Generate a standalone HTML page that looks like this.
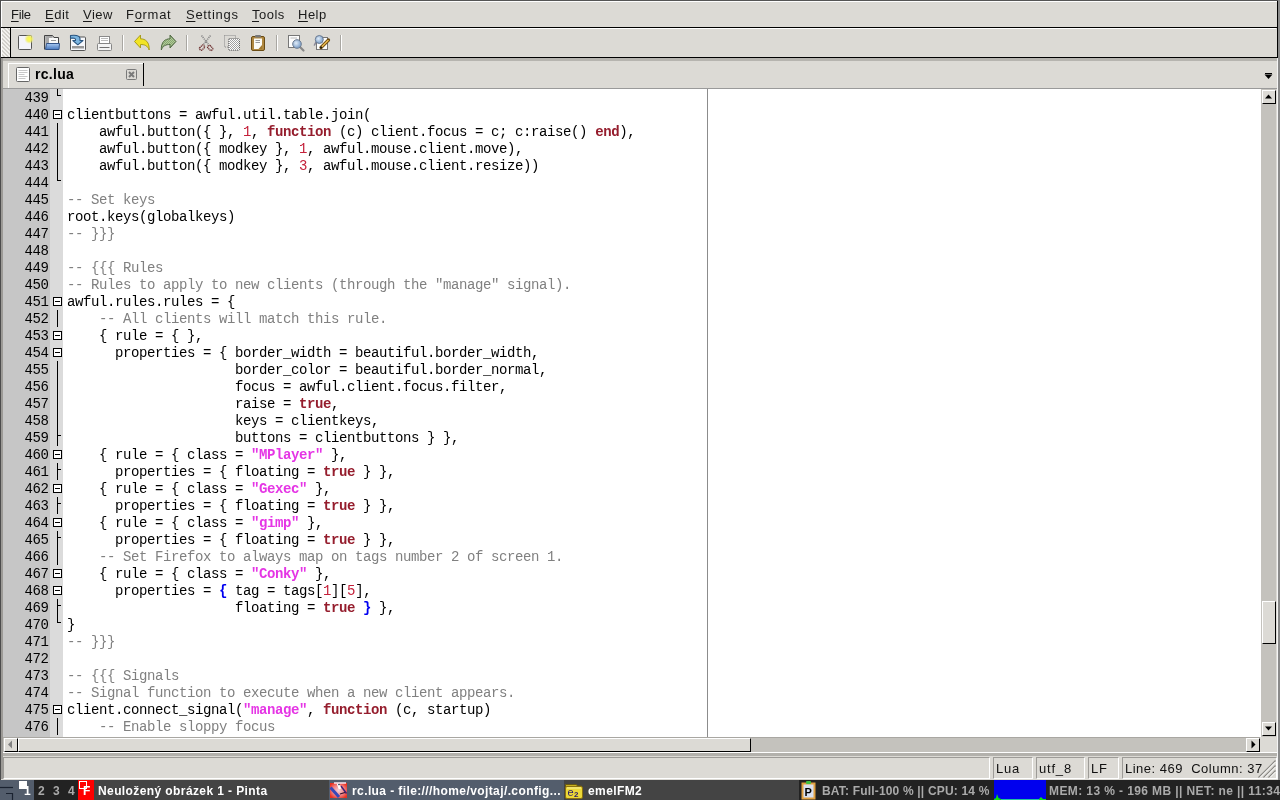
<!DOCTYPE html>
<html><head><meta charset="utf-8">
<style>
*{margin:0;padding:0;box-sizing:border-box}
html,body{width:1280px;height:800px;overflow:hidden;background:#dcdad5;font-family:"Liberation Sans",sans-serif;position:relative}
body{will-change:transform;-webkit-font-smoothing:antialiased}
.a{position:absolute}
/* window border */
#lb{left:0;top:0;width:1px;height:780px;background:#4c4c4c}
#lb2{left:1px;top:58px;width:2px;height:721px;background:#9c9a96}
#rb{left:1278px;top:0;width:2px;height:780px;background:#8a8a8a}
#rbw{left:1277px;top:58px;width:1px;height:721px;background:#f4f4f4}
#tb{left:0;top:0;width:1280px;height:1px;background:#555}
/* menu */
.mi{position:absolute;top:7px;font-size:13px;letter-spacing:0.5px;color:#1a1a1a;white-space:pre}
.mi u{text-decoration:underline;text-decoration-thickness:1px;text-underline-offset:1.5px}
/* toolbar */
#tbar{left:1px;top:27px;width:1277px;height:31px;background:#dcdad5;border-top:1px solid #000;border-bottom:1px solid #000}
#handle{left:2px;top:28px;width:8px;height:29px;background:repeating-linear-gradient(45deg,#f2f1ee 0 1.4px,#d2d0cb 1.4px 2.8px)}
#hline{left:10px;top:28px;width:1px;height:29px;background:#000}
#hwhite{left:11px;top:28px;width:1265px;height:1px;background:#fff}
.sep{position:absolute;top:35px;width:2px;height:16px;border-left:1px solid #a9a7a2;border-right:1px solid #fff}
/* tabs */
#tabarea{left:3px;top:58px;width:1274px;height:31px;background:#dcdad5}
#tabshade{left:3px;top:58px;width:1274px;height:3px;background:#b6b4af}
#tab{left:8px;top:63px;width:135px;height:25px;background:#dcdad5;border-top:1px solid #fff;border-left:1px solid #fff}
#tabr{left:143px;top:63px;width:1px;height:23px;background:#000}
#tabtxt{left:35px;top:66px;font-size:14px;font-weight:bold;color:#000;letter-spacing:0.3px}
#tabline{left:3px;top:88px;width:1274px;height:1px;background:#9a9a9a}
/* editor */
#ed{left:3px;top:89px;width:1258px;height:648px;background:#fff;overflow:hidden}
#gut{left:3px;top:89px;width:47px;height:648px;background:#c6c6c6}
#fm{left:50px;top:89px;width:13px;height:648px;background:#dbdbdb}
#edge{left:707px;top:89px;width:1px;height:648px;background:#8c8c8c}
.ln{position:absolute;left:67px;height:17px;line-height:17px;margin-top:1px;font-family:"Liberation Mono",monospace;font-size:14px;letter-spacing:-0.4px;color:#000;white-space:pre}
.nu{position:absolute;left:3px;width:45.4px;text-align:right;height:17px;line-height:17px;margin-top:1px;font-family:"Liberation Mono",monospace;font-size:14px;letter-spacing:-0.4px;color:#000;white-space:pre}
i{font-style:normal}
i.k{color:#951d2d;font-weight:bold}
i.n{color:#c4203a}
i.s{color:#e535e5;font-weight:bold}
i.c{color:#808080}
i.b{color:#0000f0;font-weight:bold}
.fb{position:absolute;left:53px;width:9px;height:9px;border:1px solid #000;background:#fff}
.fb:after{content:"";position:absolute;left:1px;top:3px;width:5px;height:1px;background:#000}
.fv{position:absolute;left:57px;width:1px;background:#000}
.fh{position:absolute;left:57px;width:4px;height:1px;background:#000}
/* vscroll */
#vs{left:1261px;top:89px;width:15px;height:648px;background:#c4c2bd}
.btn{position:absolute;background:#dcdad5;border-top:1px solid #fff;border-left:1px solid #fff;border-right:1px solid #000;border-bottom:1px solid #000}
/* hscroll */
#hs{left:3px;top:737px;width:1258px;height:15px;background:#c4c2bd}
#corner{left:1260px;top:737px;width:17px;height:15px;background:#dcdad5}
/* status */
#sbw{left:3px;top:752px;width:1274px;height:1px;background:#fff}
#sbg{left:3px;top:753px;width:1274px;height:3px;background:#b3b1ac}
.pn{position:absolute;top:757px;height:22px;border-top:1px solid #9d9b97;border-left:1px solid #9d9b97;border-right:1px solid #fff;border-bottom:1px solid #fff}
.st{position:absolute;top:761px;font-size:13px;color:#111;white-space:pre;letter-spacing:0.8px}
/* taskbar */
#task{left:0;top:780px;width:1280px;height:20px;background:#222}
.tk{position:absolute;top:780px;height:20px;font-size:12px;font-weight:bold;white-space:pre;letter-spacing:0.4px}
</style></head><body>
<div id="tb" class="a"></div>
<!-- menu -->
<div class="mi" style="left:11px;letter-spacing:-0.3px"><u>F</u>ile</div>
<div class="mi" style="left:45px"><u>E</u>dit</div>
<div class="mi" style="left:83px"><u>V</u>iew</div>
<div class="mi" style="left:126px;letter-spacing:0.7px">F<u>o</u>rmat</div>
<div class="mi" style="left:186px;letter-spacing:0.7px"><u>S</u>ettings</div>
<div class="mi" style="left:252px"><u>T</u>ools</div>
<div class="mi" style="left:298px"><u>H</u>elp</div>
<!-- toolbar -->
<div id="tbar" class="a"></div>
<div id="handle" class="a"></div>
<div id="hline" class="a"></div>
<div id="hwhite" class="a"></div>
<div class="sep" style="left:122px"></div>
<div class="sep" style="left:186px"></div>
<div class="sep" style="left:276px"></div>
<div class="sep" style="left:340px"></div>
<!-- tabs -->
<div id="tabarea" class="a"></div>
<div id="tabshade" class="a"></div>
<div id="tab" class="a"></div>
<div id="tabr" class="a"></div>
<div id="tabtxt" class="a">rc.lua</div>
<div id="tabline" class="a"></div>
<svg class="a" style="left:0;top:0" width="1280" height="100" viewBox="0 0 1280 100">
<defs>
<pattern id="dith" width="2" height="2" patternUnits="userSpaceOnUse"><rect width="1" height="1" fill="#444"/><rect x="1" y="1" width="1" height="1" fill="#444"/></pattern>
<pattern id="dithw" width="2" height="2" patternUnits="userSpaceOnUse"><rect width="2" height="2" fill="#fff"/><rect width="1" height="1" fill="#777"/><rect x="1" y="1" width="1" height="1" fill="#777"/></pattern>
<radialGradient id="glow"><stop offset="0" stop-color="#ffff40"/><stop offset="0.5" stop-color="#f4f060" stop-opacity="0.9"/><stop offset="1" stop-color="#f0f080" stop-opacity="0"/></radialGradient>
<linearGradient id="blu" x1="0" y1="0" x2="0" y2="1"><stop offset="0" stop-color="#a8c8f0"/><stop offset="1" stop-color="#4a7ac0"/></linearGradient>
<radialGradient id="lens" cx="0.4" cy="0.4"><stop offset="0" stop-color="#e0ecf8"/><stop offset="1" stop-color="#8aaad0"/></radialGradient>
</defs>
<!-- New -->
<rect x="18.5" y="35.5" width="13" height="14" rx="1" fill="#f4f4fa" stroke="#555" stroke-width="1"/>
<circle cx="29.2" cy="39" r="5" fill="url(#glow)"/>
<!-- Open -->
<path d="M44.5 49.5 V35.5 H52.5 L54 37.5 H58.5 V44" fill="#c8c8c8" stroke="#444" stroke-width="1"/>
<path d="M45.5 37 H52 M45.5 39 H52 M45.5 41 H52 M45.5 43 H52" stroke="#888" stroke-width="1"/>
<rect x="49" y="38" width="9" height="6" fill="#fafafa"/>
<path d="M51 40.5 H56" stroke="#999"/>
<path d="M45.5 49.5 L46.5 43.5 H59.5 L59 49.5 Z" fill="url(#blu)" stroke="#34558a" stroke-width="1" stroke-linejoin="round"/>
<!-- Save -->
<rect x="70.5" y="37" width="15" height="13.5" rx="1" fill="#f6f8fc" stroke="#555" stroke-width="1"/>
<rect x="72" y="46" width="12" height="2.5" fill="#999"/>
<path d="M70.5 35.5 C74.5 35 79.5 35 80 38.5 V40.5 H83 L77.8 44.8 L72.8 40.5 H75.5 V39.5 C75.5 38.3 74 38 70.5 38.2 Z" fill="#7ab4e0" stroke="#2a5580" stroke-width="1.1" stroke-linejoin="round"/>
<!-- Print -->
<rect x="99.5" y="36.5" width="10" height="7" fill="#fff" stroke="#8a8a8a" stroke-width="1"/>
<path d="M101 38.5 H108 M101 40.5 H108" stroke="#bbb"/>
<rect x="97.5" y="43.5" width="14" height="7" rx="1" fill="#f4f4f4" stroke="#858585" stroke-width="1"/>
<path d="M99.5 47.5 H109.5" stroke="#707070" stroke-width="1"/>
<!-- Undo -->
<path d="M134.5 41.5 L140.5 35 V38.8 C145.5 38.8 149.5 42 149.2 50 C147.5 45.5 144.5 44.5 140.5 44.5 V48 Z" fill="#f2e424" stroke="#a89c1c" stroke-width="1" stroke-linejoin="round"/>
<!-- Redo (disabled dither) -->
<path d="M176 41.5 L170 35 V38.8 C165 38.8 161 42 161.3 50 C163 45.5 166 44.5 170 44.5 V48 Z" fill="#a8d088" stroke="#3a5a2a" stroke-width="1" stroke-linejoin="round" opacity="0.85"/>
<path d="M176 41.5 L170 35 V38.8 C165 38.8 161 42 161.3 50 C163 45.5 166 44.5 170 44.5 V48 Z" fill="url(#dith)" opacity="0.35"/>
<!-- Cut -->
<g>
<path d="M201.5 35.5 L208.5 44.5 M210.5 35.5 L203.5 44.5" stroke="#8a8a8a" stroke-width="1.6" stroke-dasharray="1.2 0.8"/>
<g transform="rotate(-45 201.8 47.8)"><rect x="199.3" y="46.3" width="5.5" height="3.2" rx="1" fill="none" stroke="#6a2a2a" stroke-width="1.3" stroke-dasharray="1.2 0.6"/></g>
<g transform="rotate(45 210.2 47.8)"><rect x="207.5" y="46.3" width="5.5" height="3.2" rx="1" fill="none" stroke="#6a2a2a" stroke-width="1.3" stroke-dasharray="1.2 0.6"/></g>
</g>
<!-- Copy disabled -->
<rect x="224.5" y="35.5" width="11" height="11.5" fill="none" stroke="#8a8a8a" stroke-width="1" stroke-dasharray="1 1"/>
<rect x="228.5" y="38.5" width="11" height="12" rx="1" fill="#fff" stroke="#555" stroke-width="1" stroke-dasharray="1 1"/>
<rect x="229" y="39" width="10" height="11" fill="url(#dithw)" opacity="0.7"/>
<!-- Paste -->
<rect x="251.5" y="36.5" width="13" height="14" rx="1.5" fill="#b08840" stroke="#6a4c14" stroke-width="1"/>
<rect x="254" y="38.5" width="8" height="10.5" fill="#fbfbf6"/>
<path d="M262 45 L258.5 49 H262 Z" fill="#a07a30"/>
<path d="M255.5 40.5 H260 M255.5 42.5 H260" stroke="#999"/>
<rect x="255" y="35" width="6" height="2.5" rx="1" fill="#777"/>
<!-- Find -->
<rect x="288.5" y="35.5" width="11" height="12" fill="#fdfdfd" stroke="#777" stroke-width="1"/>
<path d="M290.5 38 H297" stroke="#bbb"/>
<path d="M300 47 L303.5 50.5" stroke="#888" stroke-width="2.2" stroke-linecap="round"/>
<circle cx="297" cy="44" r="4.3" fill="url(#lens)" stroke="#6a7a90" stroke-width="1"/>
<!-- Replace -->
<rect x="316.5" y="37.5" width="11" height="12" fill="#fdfdfd" stroke="#777" stroke-width="1"/>
<path d="M316 42 L314.5 45" stroke="#889" stroke-width="1.6" stroke-linecap="round"/>
<circle cx="319.3" cy="39.5" r="4" fill="url(#lens)" stroke="#6a7a90" stroke-width="1"/>
<path d="M321 47.5 L328.5 40" stroke="#6a4a10" stroke-width="3.2" stroke-linecap="round"/>
<path d="M321.5 47 L328 40.5" stroke="#e8b850" stroke-width="1.6" stroke-linecap="round"/>
<path d="M320.5 48 L321.8 46.7" stroke="#111" stroke-width="1.6"/>
<!-- tab doc icon -->
<rect x="16.5" y="67.5" width="13" height="14" rx="1" fill="#fff" stroke="#666" stroke-width="1"/>
<path d="M18.5 70.5 H27.5 M18.5 72.5 H27.5 M18.5 74.5 H24.5 M18.5 76.5 H27.5 M18.5 78.5 H25.5" stroke="#c8c8c8" stroke-width="1"/>
<!-- close box -->
<rect x="126.5" y="69.5" width="10" height="10" rx="1" fill="none" stroke="#7a7a7a" stroke-width="1"/>
<path d="M129 72 L134 77 M134 72 L129 77" stroke="#7a7a7a" stroke-width="2"/>
<!-- dropdown -->
<path d="M1265 73.5 H1272" stroke="#000" stroke-width="1"/>
<path d="M1264.5 74.5 H1272.5 L1268.5 79 Z" fill="#000"/>
</svg>

<!-- editor -->
<div id="ed" class="a"></div>
<div id="gut" class="a"></div>
<div id="fm" class="a"></div>
<div id="edge" class="a"></div>
<div class="nu" style="top:89px">439</div>
<div class="nu" style="top:106px">440</div>
<div class="nu" style="top:123px">441</div>
<div class="nu" style="top:140px">442</div>
<div class="nu" style="top:157px">443</div>
<div class="nu" style="top:174px">444</div>
<div class="nu" style="top:191px">445</div>
<div class="nu" style="top:208px">446</div>
<div class="nu" style="top:225px">447</div>
<div class="nu" style="top:242px">448</div>
<div class="nu" style="top:259px">449</div>
<div class="nu" style="top:276px">450</div>
<div class="nu" style="top:293px">451</div>
<div class="nu" style="top:310px">452</div>
<div class="nu" style="top:327px">453</div>
<div class="nu" style="top:344px">454</div>
<div class="nu" style="top:361px">455</div>
<div class="nu" style="top:378px">456</div>
<div class="nu" style="top:395px">457</div>
<div class="nu" style="top:412px">458</div>
<div class="nu" style="top:429px">459</div>
<div class="nu" style="top:446px">460</div>
<div class="nu" style="top:463px">461</div>
<div class="nu" style="top:480px">462</div>
<div class="nu" style="top:497px">463</div>
<div class="nu" style="top:514px">464</div>
<div class="nu" style="top:531px">465</div>
<div class="nu" style="top:548px">466</div>
<div class="nu" style="top:565px">467</div>
<div class="nu" style="top:582px">468</div>
<div class="nu" style="top:599px">469</div>
<div class="nu" style="top:616px">470</div>
<div class="nu" style="top:633px">471</div>
<div class="nu" style="top:650px">472</div>
<div class="nu" style="top:667px">473</div>
<div class="nu" style="top:684px">474</div>
<div class="nu" style="top:701px">475</div>
<div class="nu" style="top:718px">476</div>
<div class="fv" style="top:89px;height:7px"></div><div class="fh" style="top:95px"></div>
<div class="fb" style="top:110px"></div>
<div class="fv" style="top:123px;height:17px"></div>
<div class="fv" style="top:140px;height:17px"></div>
<div class="fv" style="top:157px;height:17px"></div>
<div class="fv" style="top:174px;height:7px"></div><div class="fh" style="top:180px"></div>
<div class="fb" style="top:297px"></div>
<div class="fv" style="top:310px;height:17px"></div>
<div class="fb" style="top:331px"></div>
<div class="fb" style="top:348px"></div>
<div class="fv" style="top:361px;height:17px"></div>
<div class="fv" style="top:378px;height:17px"></div>
<div class="fv" style="top:395px;height:17px"></div>
<div class="fv" style="top:412px;height:17px"></div>
<div class="fv" style="top:429px;height:17px"></div><div class="fh" style="top:435px"></div>
<div class="fb" style="top:450px"></div>
<div class="fv" style="top:463px;height:17px"></div><div class="fh" style="top:469px"></div>
<div class="fb" style="top:484px"></div>
<div class="fv" style="top:497px;height:17px"></div><div class="fh" style="top:503px"></div>
<div class="fb" style="top:518px"></div>
<div class="fv" style="top:531px;height:17px"></div><div class="fh" style="top:537px"></div>
<div class="fv" style="top:548px;height:17px"></div>
<div class="fb" style="top:569px"></div>
<div class="fb" style="top:586px"></div>
<div class="fv" style="top:599px;height:17px"></div><div class="fh" style="top:605px"></div>
<div class="fv" style="top:616px;height:7px"></div><div class="fh" style="top:622px"></div>
<div class="fb" style="top:705px"></div>
<div class="fv" style="top:718px;height:17px"></div>
<div class="ln" style="top:89px"></div>
<div class="ln" style="top:106px">clientbuttons = awful.util.table.join(</div>
<div class="ln" style="top:123px">    awful.button({ }, <i class="n">1</i>, <i class="k">function</i> (c) client.focus = c; c:raise() <i class="k">end</i>),</div>
<div class="ln" style="top:140px">    awful.button({ modkey }, <i class="n">1</i>, awful.mouse.client.move),</div>
<div class="ln" style="top:157px">    awful.button({ modkey }, <i class="n">3</i>, awful.mouse.client.resize))</div>
<div class="ln" style="top:174px"></div>
<div class="ln" style="top:191px"><i class="c">-- Set keys</i></div>
<div class="ln" style="top:208px">root.keys(globalkeys)</div>
<div class="ln" style="top:225px"><i class="c">-- }}}</i></div>
<div class="ln" style="top:242px"></div>
<div class="ln" style="top:259px"><i class="c">-- {{{ Rules</i></div>
<div class="ln" style="top:276px"><i class="c">-- Rules to apply to new clients (through the &quot;manage&quot; signal).</i></div>
<div class="ln" style="top:293px">awful.rules.rules = {</div>
<div class="ln" style="top:310px">    <i class="c">-- All clients will match this rule.</i></div>
<div class="ln" style="top:327px">    { rule = { },</div>
<div class="ln" style="top:344px">      properties = { border_width = beautiful.border_width,</div>
<div class="ln" style="top:361px">                     border_color = beautiful.border_normal,</div>
<div class="ln" style="top:378px">                     focus = awful.client.focus.filter,</div>
<div class="ln" style="top:395px">                     raise = <i class="k">true</i>,</div>
<div class="ln" style="top:412px">                     keys = clientkeys,</div>
<div class="ln" style="top:429px">                     buttons = clientbuttons } },</div>
<div class="ln" style="top:446px">    { rule = { class = <i class="s">&quot;MPlayer&quot;</i> },</div>
<div class="ln" style="top:463px">      properties = { floating = <i class="k">true</i> } },</div>
<div class="ln" style="top:480px">    { rule = { class = <i class="s">&quot;Gexec&quot;</i> },</div>
<div class="ln" style="top:497px">      properties = { floating = <i class="k">true</i> } },</div>
<div class="ln" style="top:514px">    { rule = { class = <i class="s">&quot;gimp&quot;</i> },</div>
<div class="ln" style="top:531px">      properties = { floating = <i class="k">true</i> } },</div>
<div class="ln" style="top:548px">    <i class="c">-- Set Firefox to always map on tags number 2 of screen 1.</i></div>
<div class="ln" style="top:565px">    { rule = { class = <i class="s">&quot;Conky&quot;</i> },</div>
<div class="ln" style="top:582px">      properties = <i class="b">{</i> tag = tags[<i class="n">1</i>][<i class="n">5</i>],</div>
<div class="ln" style="top:599px">                     floating = <i class="k">true</i> <i class="b">}</i> },</div>
<div class="ln" style="top:616px">}</div>
<div class="ln" style="top:633px"><i class="c">-- }}}</i></div>
<div class="ln" style="top:650px"></div>
<div class="ln" style="top:667px"><i class="c">-- {{{ Signals</i></div>
<div class="ln" style="top:684px"><i class="c">-- Signal function to execute when a new client appears.</i></div>
<div class="ln" style="top:701px">client.connect_signal(<i class="s">&quot;manage&quot;</i>, <i class="k">function</i> (c, startup)</div>
<div class="ln" style="top:718px">    <i class="c">-- Enable sloppy focus</i></div>
<!-- vscroll -->
<div id="vs" class="a"></div>
<div class="btn" style="left:1262px;top:90px;width:14px;height:14px"></div>
<div class="btn" style="left:1262px;top:601px;width:14px;height:43px"></div>
<div class="btn" style="left:1262px;top:722px;width:14px;height:14px"></div>
<!-- hscroll -->
<div id="hs" class="a"></div>
<div class="a" style="left:3px;top:737px;width:1258px;height:1px;background:#a9a7a2"></div>
<div class="btn" style="left:4px;top:738px;width:14px;height:14px"></div>
<div class="btn" style="left:18px;top:738px;width:733px;height:14px"></div>
<div class="btn" style="left:1246px;top:738px;width:14px;height:14px"></div>
<div id="corner" class="a"></div>
<!-- status -->
<div id="sbw" class="a"></div>
<div id="sbg" class="a"></div>
<div class="pn" style="left:3px;width:987px"></div>
<div class="pn" style="left:993px;width:40px"></div>
<div class="pn" style="left:1036px;width:49px"></div>
<div class="pn" style="left:1088px;width:31px"></div>
<div class="pn" style="left:1122px;width:155px"></div>
<div class="st" style="left:996px">Lua</div>
<div class="st" style="left:1039px">utf_8</div>
<div class="st" style="left:1091px">LF</div>
<div class="st" style="left:1125px;letter-spacing:0.5px">Line: 469  Column: 37</div>
<svg class="a" style="left:0;top:0;pointer-events:none" width="1280" height="800">
<path d="M1265 98.5 H1272 L1268.5 94.5 Z" fill="#000"/>
<path d="M1265 726.5 H1272 L1268.5 730.5 Z" fill="#000"/>
<path d="M12 740.5 V748.5 L8 744.5 Z" fill="#808080"/>
<path d="M1251.5 740.5 V748.5 L1255.5 744.5 Z" fill="#000"/>
<path d="M1258.5 777.5 L1275.5 760.5 M1263.5 777.5 L1275.5 765.5 M1268.5 777.5 L1275.5 770.5" stroke="#8a8884" stroke-width="1.2"/>
<path d="M1260 777.5 L1275.5 762 M1265 777.5 L1275.5 767 M1270 777.5 L1275.5 772" stroke="#fff" stroke-width="1"/>
</svg>

<div id="lb" class="a"></div>
<div id="lb2" class="a"></div>
<div id="rb" class="a"></div>
<div id="rbw" class="a"></div>
<div class="a" style="left:1px;top:1px;width:1277px;height:1px;background:#fff"></div>
<div class="a" style="left:1px;top:1px;width:1px;height:56px;background:#fff"></div>
<div class="a" style="left:1px;top:27px;width:1277px;height:1px;background:#000"></div>
<div class="a" style="left:1277px;top:1px;width:1px;height:57px;background:#000"></div>
<!-- taskbar -->
<div id="task" class="a"></div>
<div class="a" style="left:0;top:780px;width:34px;height:20px;background:#535d6c"></div>
<div class="a" style="left:78px;top:780px;width:16px;height:20px;background:#ff0000"></div>
<div class="a" style="left:94px;top:780px;width:235px;height:20px;background:#444"></div>
<div class="a" style="left:329px;top:780px;width:235px;height:20px;background:#535d6c"></div>
<div class="a" style="left:564px;top:780px;width:235px;height:20px;background:#444"></div>
<svg class="a" style="left:0;top:780px" width="1280" height="20">
<path d="M0 7.5 H13" stroke="#1a2230" stroke-width="1.2"/>
<path d="M6 13.5 H12.5 V20" stroke="#1a2230" stroke-width="1.2" fill="none"/>
<rect x="19" y="1" width="8" height="8" fill="#fff"/>
<rect x="79.5" y="1.5" width="7" height="7" fill="none" stroke="#fff" stroke-width="1"/>
</svg>
<div class="tk" style="left:24px;top:784px;color:#fff">1</div>
<div class="tk" style="left:38px;top:784px;color:#aaa">2</div>
<div class="tk" style="left:53px;top:784px;color:#aaa">3</div>
<div class="tk" style="left:68px;top:784px;color:#aaa">4</div>
<div class="tk" style="left:83px;top:784px;color:#fff">F</div>
<div class="tk" style="left:98px;top:784px;color:#fff">Neuložený obrázek 1 - Pinta</div>
<div class="tk" style="left:352px;top:784px;color:#fff">rc.lua - file:///home/vojtaj/.config...</div>
<div class="tk" style="left:588px;top:784px;color:#fff">emelFM2</div>
<div class="tk" style="left:822px;top:784px;color:#aaa;letter-spacing:0.18px">BAT: Full-100 % || CPU: 14 %</div>
<div class="tk" style="left:1049px;top:784px;color:#aaa">MEM: 13 % - 196 MB || NET: ne || 11:34</div>
<div class="a" style="left:994px;top:780px;width:52px;height:20px;background:#0000ee"></div>
<svg class="a" style="left:994px;top:780px" width="52" height="20">
<path d="M0 20 V19 L2 18 L3 14 L4.5 18 L7 19 H45 L47 17 L49 19 L52 19 V20 Z" fill="#10e010"/>
<path d="M7 19.5 H45" stroke="#20c0a0" stroke-width="1"/>
</svg>
<svg class="a" style="left:329px;top:782px" width="20" height="17">
<defs><radialGradient id="kr" cx="0.5" cy="0.5" r="0.6"><stop offset="0" stop-color="#f4d0d8"/><stop offset="0.6" stop-color="#f08080"/><stop offset="1" stop-color="#e83020"/></radialGradient></defs>
<rect x="1" y="1" width="17" height="15" fill="url(#kr)"/>
<path d="M5 1 H17" stroke="#f8e8f0" stroke-width="1.5"/>
<path d="M1.5 5.5 L10 15" stroke="#3848b8" stroke-width="3"/>
<path d="M12 4 L17.5 11.5" stroke="#402078" stroke-width="1.5"/>
<path d="M9 1.5 L11 7" stroke="#fff" stroke-width="2.5"/>
<path d="M9.5 2 L10.5 3" stroke="#203050" stroke-width="1.5"/>
<path d="M11 12 L16 10.5" stroke="#301030" stroke-width="1.2"/>
</svg>
<svg class="a" style="left:564px;top:781px" width="21" height="19">
<path d="M1.5 3.5 H12 L14 5 H17.5 V16.5 H1.5 Z" fill="#c8b020" stroke="#6a5a10" stroke-width="1"/>
<rect x="1.5" y="5.5" width="17" height="12" rx="1.5" fill="#ecd838" stroke="#8a7010" stroke-width="1"/>
<path d="M3 7 H17" stroke="#f8f0a0" stroke-width="1"/>
<text x="3.5" y="15" font-family="Liberation Sans" font-size="11" fill="#30206a">e</text>
<text x="10" y="16" font-family="Liberation Sans" font-size="8" font-weight="bold" fill="#30206a">2</text>
</svg>
<svg class="a" style="left:801px;top:781px" width="16" height="19">
<rect x="1.5" y="2.5" width="12" height="15" fill="#d8e0f0" stroke="#e0a040" stroke-width="2"/>
<rect x="5" y="0" width="5" height="3" rx="1" fill="#40c040"/>
<text x="3.5" y="14.5" font-family="Liberation Sans" font-size="11" font-weight="bold" fill="#000">P</text>
</svg>

</body></html>
